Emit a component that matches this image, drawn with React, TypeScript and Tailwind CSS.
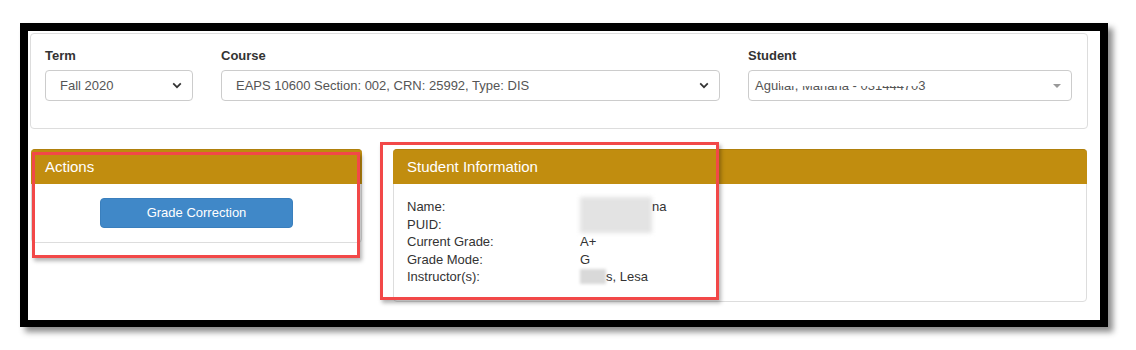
import React from 'react'

const font = { fontFamily: '"Liberation Sans", Arial, sans-serif' }

function Chevron() {
  return (
    <svg width="10" height="7" viewBox="0 0 10 7" className="shrink-0">
      <path d="M1.2 1.4 L5 5.2 L8.8 1.4" fill="none" stroke="#333" strokeWidth="1.7" />
    </svg>
  )
}

function FakeSelect({ value, className }: { value: string; className: string }) {
  return (
    <div
      className={`h-[31px] border border-[#ccc] rounded-[4px] bg-white flex items-center justify-between pl-[14px] pr-[10px] text-[13px] text-[#555] ${className}`}
    >
      <span>{value}</span>
      <Chevron />
    </div>
  )
}

function Panel({ title, className, children }: { title: string; className: string; children: React.ReactNode }) {
  return (
    <div className={`border border-[#ddd] rounded-[4px] bg-white ${className}`}>
      <div className="h-[35px] -mx-px -mt-px bg-[#c18d0f] border-t border-[#b0800c] rounded-t-[4px] flex items-center pl-[14px] text-[15px] text-white">
        {title}
      </div>
      {children}
    </div>
  )
}

const info: [string, string][] = [
  ['Name:', 'na'],
  ['PUID:', ''],
  ['Current Grade:', 'A+'],
  ['Grade Mode:', 'G'],
  ['Instructor(s):', 's, Lesa'],
]

export default function App() {
  return (
    <div className="w-[1136px] h-[350px] bg-white pt-[23px] pl-[20px]" style={font}>
      <div className="relative w-[1088px] h-[304px] border-8 border-b-[7px] border-black bg-white shadow-[5px_5px_6px_rgba(0,0,0,0.45)]">
        {/* filters card */}
        <div className="ml-[2px] mt-[2px] w-[1058px] h-[96px] border border-[#ddd] rounded-[4px] pt-[13px] pl-[14px] flex text-[#333]">
          <div className="w-[148px]">
            <div className="text-[13px] font-bold leading-[18px] mb-[5px]">Term</div>
            <FakeSelect value="Fall 2020" className="w-[148px]" />
          </div>
          <div className="ml-[28px] w-[499px]">
            <div className="text-[13px] font-bold leading-[18px] mb-[5px]">Course</div>
            <FakeSelect value="EAPS 10600 Section: 002, CRN: 25992, Type: DIS" className="w-[499px]" />
          </div>
          <div className="ml-[28px] w-[324px]">
            <div className="text-[13px] font-bold leading-[18px] mb-[5px]">Student</div>
            <div className="h-[31px] border border-[#ccc] rounded-[4px] bg-white flex items-center justify-between pl-[6px] pr-[10px] text-[13px] text-[#555]">
              <span className="relative leading-[15px]">
                Aguilar, Mariana - 031444703
                <span className="absolute left-[25px] top-0 w-[138px] h-[8px] bg-white" />
              </span>
              <svg width="8" height="4" viewBox="0 0 8 4">
                <path d="M0 0 L8 0 L4 4 Z" fill="#999" />
              </svg>
            </div>
          </div>
        </div>

        {/* panels row */}
        <div className="flex items-start mt-[20px] pl-[3px]">
          <Panel title="Actions" className="w-[331px]">
            <div className="py-[14px] flex justify-center">
              <button className="w-[193px] h-[30px] bg-[#4088c8] border border-[#3a7fbd] rounded-[4px] text-white text-[13px]">
                Grade Correction
              </button>
            </div>
          </Panel>
          <Panel title="Student Information" className="ml-[31px] w-[694px]">
            <div className="pt-[14px] pb-[15px] pl-[13px] text-[13px] leading-[17.5px] text-[#333]">
              {info.map(([k, v], i) => (
                <div key={k} className="flex">
                  <div className="w-[173px]">{k}</div>
                  <div className="relative">
                    {i === 0 && (
                      <span className="absolute left-0 top-[-1px] w-[72px] h-[36px] bg-[#e3e3e3] blur-[2px]" />
                    )}
                    {i === 4 && (
                      <span className="absolute left-0 top-[1px] w-[26px] h-[15px] bg-[#d9d9d9] blur-[1.5px]" />
                    )}
                    <span className={i === 0 ? 'relative pl-[72px]' : i === 4 ? 'relative pl-[26px]' : ''}>{v}</span>
                  </div>
                </div>
              ))}
            </div>
          </Panel>
        </div>

        {/* annotation boxes */}
        <div className="absolute left-[4px] top-[121px] w-[328px] h-[106px] border-[3px] border-[#f24848] shadow-[2px_3px_4px_rgba(0,0,0,0.3)]" />
        <div className="absolute left-[352px] top-[111px] w-[339px] h-[158px] border-[3px] border-[#f24848] shadow-[2px_3px_4px_rgba(0,0,0,0.3)]" />
      </div>
    </div>
  )
}
